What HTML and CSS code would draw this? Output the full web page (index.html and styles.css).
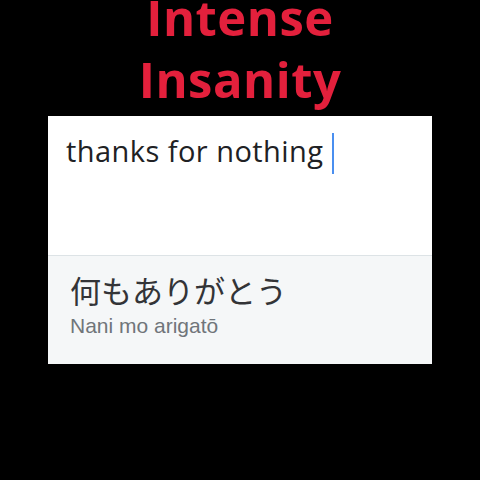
FILE: index.html
```html
<!DOCTYPE html>
<html>
<head>
<meta charset="utf-8">
<link rel="stylesheet" href="styles.css">
</head>
<body>
<div class="page">
  <h1 class="title">Intense<br>Insanity</h1>
  <div class="card">
    <div class="source">
      <span class="src-text">thanks for nothing</span><span class="caret"></span>
    </div>
    <div class="result">
      <div class="jp">何もありがとう</div>
      <div class="roman">Nani mo arigatō</div>
    </div>
  </div>
</div>
</body>
</html>
```
FILE: styles.css
```css
html, body {
  margin: 0;
  padding: 0;
  background: #000;
  width: 480px;
  height: 480px;
  overflow: hidden;
}
.page {
  display: flex;
  flex-direction: column;
  align-items: center;
}
.title {
  margin: -14px 0 0 0;
  font-family: "Open Sans", Lato, sans-serif;
  font-weight: 700;
  font-size: 49px;
  line-height: 62px;
  letter-spacing: 0.5px;
  color: #e3203c;
  text-align: center;
  height: 130px;
}
.card {
  width: 384px;
  height: 248px;
  display: flex;
  flex-direction: column;
}
.source {
  background: #fff;
  height: 140px;
  border-bottom: 1px solid #dde3e6;
  padding: 15px 0 0 18px;
  box-sizing: border-box;
  display: flex;
  align-items: flex-start;
}
.src-text {
  font-family: "Open Sans", Roboto, sans-serif;
  font-size: 29px;
  line-height: 40px;
  letter-spacing: 0.45px;
  color: #202124;
}
.caret {
  width: 2px;
  height: 41px;
  background: #4a8ff0;
  margin-left: 8px;
  margin-top: 2px;
}
.result {
  flex: 1;
  background: #f5f7f8;
  padding: 14px 0 0 22px;
}
.jp {
  font-family: "Noto Sans CJK JP", sans-serif;
  font-size: 31px;
  line-height: 40px;
  color: #333437;
}
.roman {
  font-family: "Liberation Sans", Arial, sans-serif;
  font-size: 21px;
  line-height: 26px;
  color: #70757a;
  margin-top: 3px;
}
```
